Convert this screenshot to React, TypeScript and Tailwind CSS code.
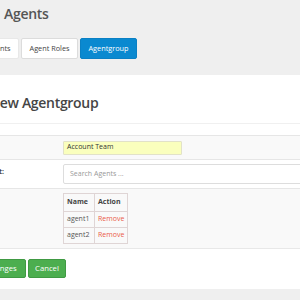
import React from "react";

const font = { fontFamily: '"Open Sans", "Noto Sans", sans-serif' };

export default function App() {
  return (
    <div className="w-[300px] h-[300px] overflow-hidden bg-[#efefef]" style={font}>
      <div className="-ml-[42px] w-[380px]">
        {/* header */}
        <div className="bg-[#efefef] pt-[4px] pb-[16px]">
          <h1 className="ml-[46px] text-[14px] leading-[20px] font-semibold tracking-[-0.3px] text-[#555]">
            Agents
          </h1>
          <div className="mt-[14px] ml-[21px] flex gap-[2px]">
            <div className="w-[40px] h-[21px] flex items-center justify-center bg-white border border-[#e8e8e8] rounded-[2px] text-[7.3px] text-[#444]">
              Agents
            </div>
            <div className="w-[57px] h-[21px] flex items-center justify-center bg-white border border-[#dcdcdc] rounded-[2px] text-[7.3px] text-[#444]">
              Agent Roles
            </div>
            <div className="w-[57px] h-[21px] flex items-center justify-center bg-[#0a89d0] border border-[#0a80c4] rounded-[2px] text-[7.3px] text-white">
              Agentgroup
            </div>
          </div>
        </div>

        {/* white panel */}
        <div className="bg-white pt-[18px] pb-[11px]">
          <div className="pb-[10px] border-b border-[#f0f0f0]">
            <h2 className="ml-[31px] text-[14px] leading-[20px] font-semibold tracking-[-0.3px] text-[#454545]">
              New Agentgroup
            </h2>
          </div>

          <div className="mt-[11px] border-b border-[#e8e8e8]">
            {/* row 1 */}
            <div className="h-[24px] border-t border-[#e6e6e6] bg-[#f9f9f9] flex items-center">
              <div className="w-[105px] pl-[8px] text-[7px] font-bold text-[#444]">Name:</div>
              <div className="w-[119px] h-[14px] bg-[#faffbd] border border-[#e2e2c8] rounded-[1px] flex items-center pl-[3px] text-[7px] text-[#333]">
                Account Team
              </div>
            </div>
            {/* row 2 */}
            <div className="h-[29px] border-t border-[#e6e6e6] bg-white flex items-start">
              <div className="w-[105px] pl-[8px] pt-[6px] text-[7px] leading-[12px] font-bold text-[#444]">
                Add Agent:
              </div>
              <div className="mt-[4px] h-[20px] w-[260px] bg-white border border-[#dddddd] rounded-[2px] flex items-center pl-[6px] text-[7px] text-[#999]">
                Search Agents ...
              </div>
            </div>
            {/* row 3 */}
            <div className="h-[60px] border-t border-[#e6e6e6] bg-[#f9f9f9] flex items-start">
              <div className="w-[105px] pl-[8px] pt-[6px] text-[7px] leading-[12px] font-bold text-[#444]">
                Agents:
              </div>
              <div className="mt-[4px] grid grid-cols-[31px_33px] border-l border-t border-[#dfd5d5] text-[7px]">
                <div className="h-[18px] border-r border-b border-[#dfd5d5] flex items-center pl-[3px] font-bold text-[#444]">
                  Name
                </div>
                <div className="h-[18px] border-r border-b border-[#dfd5d5] flex items-center pl-[3px] font-bold text-[#444]">
                  Action
                </div>
                <div className="h-[16px] border-r border-b border-[#dfd5d5] flex items-center pl-[3px] text-[#555]">
                  agent1
                </div>
                <div className="h-[16px] border-r border-b border-[#dfd5d5] flex items-center pl-[3px] text-[#ea5a47]">
                  Remove
                </div>
                <div className="h-[16px] border-r border-b border-[#dfd5d5] flex items-center pl-[3px] text-[#555]">
                  agent2
                </div>
                <div className="h-[16px] border-r border-b border-[#dfd5d5] flex items-center pl-[3px] text-[#ea5a47]">
                  Remove
                </div>
              </div>
            </div>
          </div>

          <div className="mt-[10px] flex gap-[2px]">
            <div className="w-[68px] h-[19px] flex items-center justify-center bg-[#4cae4f] border border-[#409a43] rounded-[2px] text-[7.7px] text-white">
              Save Changes
            </div>
            <div className="w-[38px] h-[19px] flex items-center justify-center bg-[#4cae4f] border border-[#409a43] rounded-[2px] text-[7.7px] text-white">
              Cancel
            </div>
          </div>
        </div>

        <div className="h-[20px] bg-[#efefef]" />
      </div>
    </div>
  );
}
